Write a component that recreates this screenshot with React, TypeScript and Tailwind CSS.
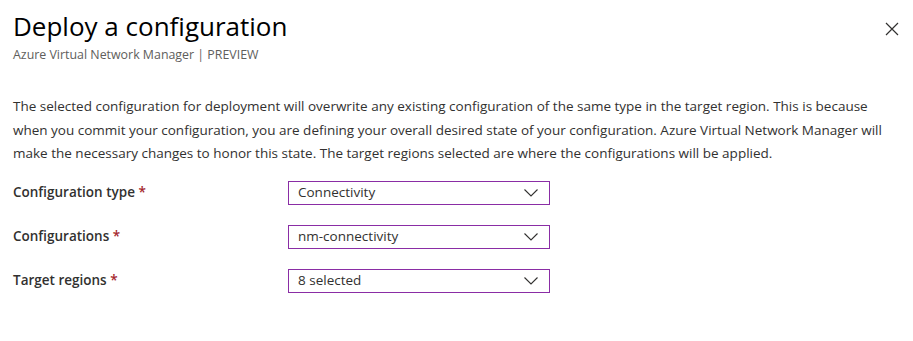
import React from 'react';

const fields = [
  { label: 'Configuration type', value: 'Connectivity' },
  { label: 'Configurations', value: 'nm-connectivity' },
  { label: 'Target regions', value: '8 selected' },
];

const Chevron = () => (
  <svg width="14" height="8" viewBox="0 0 14 8" fill="none" className="shrink-0">
    <path d="M0.5 0.5 L7 7 L13.5 0.5" stroke="#323130" strokeWidth="1.1" />
  </svg>
);

const Dropdown = ({ value }: { value: string }) => (
  <div className="flex h-[24px] w-[262px] items-center justify-between border border-[#8a2da5] pl-[9px] pr-[11px] text-[13.5px] text-[#323130]">
    <span>{value}</span>
    <Chevron />
  </div>
);

export default function App() {
  return (
    <div className="h-[341px] w-[913px] bg-white font-['Segoe_UI','Open_Sans',sans-serif] text-[#323130]">
      <div className="flex items-start justify-between pl-[13px] pr-[14px] pt-[10px]">
        <div>
          <h1 className="text-[26px] leading-[32px] font-normal text-black">Deploy a configuration</h1>
          <div className="mt-[5px] text-[12.4px] leading-[16px] text-[#605e5c]">
            Azure Virtual Network Manager | PREVIEW
          </div>
        </div>
        <button className="mt-[12px] p-0">
          <svg width="14" height="14" viewBox="0 0 14 14" fill="none">
            <path d="M1 1 L13 13 M13 1 L1 13" stroke="#323130" strokeWidth="1.2" />
          </svg>
        </button>
      </div>

      <p className="mt-[32px] px-[13px] text-[13.5px] leading-[23.5px] text-[#323130]">
        <span className="block whitespace-nowrap">
          The selected configuration for deployment will overwrite any existing configuration of the same type in the target region. This is because
        </span>
        <span className="block whitespace-nowrap">
          when you commit your configuration, you are defining your overall desired state of your configuration. Azure Virtual Network Manager will
        </span>
        <span className="block whitespace-nowrap">
          make the necessary changes to honor this state. The target regions selected are where the configurations will be applied.
        </span>
      </p>

      <div className="mt-[15px] flex flex-col gap-[20px] px-[13px]">
        {fields.map((f) => (
          <div key={f.label} className="flex items-center">
            <label className="w-[275px] text-[13.5px] font-semibold text-[#323130]">
              {f.label} <span className="text-[#a4262c]">*</span>
            </label>
            <Dropdown value={f.value} />
          </div>
        ))}
      </div>
    </div>
  );
}
